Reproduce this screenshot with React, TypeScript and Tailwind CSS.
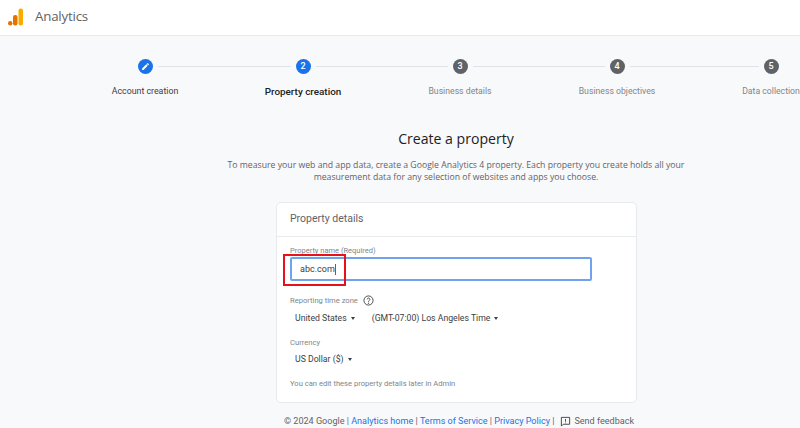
import React from "react";

const steps = [
  { label: "Account creation", cls: "w-[158px] text-[#3c4043] text-[8.8px]" },
  { label: "Property creation", cls: "w-[158px] text-[#202124] font-medium text-[9.9px]" },
  { label: "Business details", cls: "w-[156px] text-[#80868b] text-[8.7px]" },
  { label: "Business objectives", cls: "w-[158px] text-[#80868b] text-[8.7px]" },
  { label: "Data collection", cls: "w-[150px] text-[#80868b] text-[8.7px]" },
];

function Caret() {
  return <span className="ml-[4px] inline-block w-0 h-0 border-l-[2.5px] border-r-[2.5px] border-t-[3px] border-l-transparent border-r-transparent border-t-[#3c4043] align-middle" />;
}

function Circle({ children, blue }: { children: React.ReactNode; blue?: boolean }) {
  return (
    <div className={`w-[15px] h-[15px] shrink-0 rounded-full flex items-center justify-center text-white text-[9px] font-medium ${blue ? "bg-[#1a73e8]" : "bg-[#5f6368]"}`}>
      {children}
    </div>
  );
}

export default function App() {
  return (
    <div className="w-[800px] h-[428px] overflow-hidden bg-[#f8f9fb] font-['Roboto',sans-serif] flex flex-col">
      <header className="h-[36px] shrink-0 bg-white border-b border-[#e8eaed] flex items-center pl-[8px] pb-[1px]">
        <svg width="16" height="18" viewBox="0 0 16 18">
          <rect x="10.5" y="0.5" width="4.5" height="17" rx="2" fill="#f9ab00" />
          <rect x="5" y="7" width="4.5" height="10.5" rx="2" fill="#e37400" />
          <circle cx="2.2" cy="15.3" r="2.2" fill="#e37400" />
        </svg>
        <span className="ml-[11px] text-[13.3px] text-[#5f6368] font-['Open_Sans',sans-serif] tracking-[-0.2px]">Analytics</span>
      </header>

      <div className="pl-[137.5px] mt-[23px] flex items-center h-[15px]">
        <Circle blue>
          <svg width="9" height="9" viewBox="0 0 24 24" fill="white"><path d="M3 17.25V21h3.75L17.81 9.94l-3.75-3.75L3 17.25zM20.71 7.04a1 1 0 0 0 0-1.41l-2.34-2.34a1 1 0 0 0-1.41 0l-1.83 1.83 3.75 3.75 1.83-1.83z" /></svg>
        </Circle>
        <div className="w-[133px] h-px bg-[#e0e3e7] mx-[5px]" />
        <Circle blue>2</Circle>
        <div className="w-[132px] h-px bg-[#e0e3e7] mx-[5px]" />
        <Circle>3</Circle>
        <div className="w-[132px] h-px bg-[#e0e3e7] mx-[5px]" />
        <Circle>4</Circle>
        <div className="w-[129px] h-px bg-[#e0e3e7] mx-[5px]" />
        <Circle>5</Circle>
      </div>

      <div className="pl-[66px] mt-[9.5px] -mb-[0.5px] flex h-[15px] w-[900px] shrink-0">
        {steps.map((s) => (
          <div key={s.label} className={`shrink-0 text-center whitespace-nowrap leading-[15px] ${s.cls}`}>
            {s.label}
          </div>
        ))}
      </div>

      <h1 className="mt-[29px] text-center ml-[112px] text-[14.1px] leading-[24px] text-[#202124] font-['Open_Sans',sans-serif]">Create a property</h1>

      <p className="mt-[8px] ml-[112px] text-center text-[8.7px] leading-[12px] text-[#5f6368] font-['Open_Sans',sans-serif]">
        To measure your web and app data, create a Google Analytics 4 property. Each property you create holds all your
        <br />
        measurement data for any selection of websites and apps you choose.
      </p>

      <section className="mt-[19px] ml-[276px] w-[361px] h-[201px] shrink-0 bg-white rounded-[5px] border border-[#e8eaed]">
        <div className="h-[34px] border-b border-[#e8eaed] pl-[13px] pb-[2px] flex items-center text-[10.5px] text-[#5f6368]">Property details</div>
        <div className="pl-[13px]">
          <div className="mt-[9px] text-[7.5px] leading-[9px] text-[#80868b]">Property name (Required)</div>
          <div className="relative mt-[2px] w-[302px] h-[24px] rounded-[2px] border-2 border-[#6fa3f0] flex items-center pl-[8px] pt-[1px] text-[9px] text-[#3c4043]">
            abc.com<span className="w-px h-[11px] bg-[#5f6368]" />
            <div className="absolute left-[-9px] top-[-5px] w-[63px] h-[32px] border-2 border-[#e8101a]" />
          </div>
          <div className="mt-[14px] flex items-center text-[7.6px] leading-[10px] text-[#80868b]">
            Reporting time zone
            <svg className="ml-[5px]" width="11" height="11" viewBox="0 0 24 24" fill="none" stroke="#3c4043" strokeWidth="2"><circle cx="12" cy="12" r="10" /><path d="M9.2 9.5a2.9 2.9 0 1 1 4.5 2.4c-1 .7-1.7 1.2-1.7 2.6" /><circle cx="12" cy="17.8" r=".6" fill="#3c4043" /></svg>
          </div>
          <div className="mt-[6px] flex items-center pl-[5px] text-[8.7px] leading-[12px] text-[#3c4043]">
            <span>United States<Caret /></span>
            <span className="ml-[17px]">(GMT-07:00) Los Angeles Time<Caret /></span>
          </div>
          <div className="mt-[14px] text-[7.6px] leading-[10px] text-[#80868b]">Currency</div>
          <div className="mt-[5px] pl-[5px] text-[8.7px] leading-[12px] text-[#3c4043]">US Dollar ($)<Caret /></div>
          <div className="mt-[14px] text-[7.6px] leading-[10px] text-[#80868b]">You can edit these property details later in Admin</div>
        </div>
      </section>

      <footer className="mt-[11px] ml-[284px] flex items-center whitespace-nowrap text-[9.05px] leading-[14px] text-[#5f6368]">
        <span>© 2024 Google |&nbsp;</span>
        <span className="text-[#1a73e8]">Analytics home</span><span>&nbsp;|&nbsp;</span>
        <span className="text-[#1a73e8]">Terms of Service</span><span>&nbsp;|&nbsp;</span>
        <span className="text-[#1a73e8]">Privacy Policy</span><span>&nbsp;|</span>
        <svg className="ml-[6px] mr-[3px]" width="11" height="11" viewBox="0 0 24 24" fill="none" stroke="#3c4043" strokeWidth="2"><path d="M3 3h18v15H7l-4 4z" /><path d="M12 6.5v6M12 14.5v1.5" /></svg>
        <span>Send feedback</span>
      </footer>
    </div>
  );
}
